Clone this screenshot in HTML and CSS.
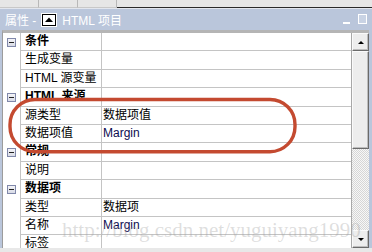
FILE: index.html
```html
<!DOCTYPE html>
<html lang="zh">
<head>
  <meta charset="UTF-8" />
  <title>属性 - HTML 项目</title>
  <link rel="stylesheet" href="styles.css">
</head>
<body>
  <div class="tabs">
    <span class="tab"></span>
    <span class="tab"></span>
    <span class="tab"></span>
    <span class="tab-rest"></span>
  </div>

  <div class="titlebar">
    <span class="title">属性 -</span>
    <span class="doc-icon">
      <svg width="16" height="14" viewBox="0 0 16 14">
        <rect x="0" y="0" width="16" height="14" fill="#fff" />
        <rect x="1.5" y="1.5" width="13" height="11" fill="none" stroke="#000" />
        <path d="M4 9 L8 4.5 L12 9 Z" fill="#000" />
      </svg>
    </span>
    <span class="title">HTML 项目</span>
    <span class="spacer"></span>
    <span class="btn-min"></span>
    <span class="btn-max"></span>
  </div>

  <div class="frame">
    <div class="grid">
      <div class="row cat"><span class="gutter"><span class="toggle"></span></span><span class="name">条件</span><span class="value"></span></div>
      <div class="row"><span class="gutter"></span><span class="name">生成变量</span><span class="value"></span></div>
      <div class="row"><span class="gutter"></span><span class="name">HTML 源变量</span><span class="value"></span></div>
      <div class="row cat"><span class="gutter"><span class="toggle"></span></span><span class="name">HTML 来源</span><span class="value"></span></div>
      <div class="row"><span class="gutter"></span><span class="name">源类型</span><span class="value">数据项值</span></div>
      <div class="row"><span class="gutter"></span><span class="name">数据项值</span><span class="value latin">Margin</span></div>
      <div class="row cat"><span class="gutter"><span class="toggle"></span></span><span class="name">常规</span><span class="value"></span></div>
      <div class="row"><span class="gutter"></span><span class="name">说明</span><span class="value"></span></div>
      <div class="row cat"><span class="gutter"><span class="toggle"></span></span><span class="name">数据项</span><span class="value"></span></div>
      <div class="row"><span class="gutter"></span><span class="name">类型</span><span class="value">数据项</span></div>
      <div class="row"><span class="gutter"></span><span class="name">名称</span><span class="value latin">Margin</span></div>
      <div class="row"><span class="gutter"></span><span class="name">标签</span><span class="value"></span></div>
    </div>

    <div class="scrollbar">
      <div class="sb-btn"><span class="arrow-up"></span></div>
      <div class="sb-thumb"></div>
      <div class="sb-track"></div>
      <div class="sb-btn"><span class="arrow-down"></span></div>
    </div>
  </div>

  <div class="footer"></div>

  <!-- annotation drawn over the screenshot -->
  <svg class="mark" width="372" height="252" viewBox="0 0 372 252">
    <rect x="10" y="99.5" width="285" height="52.2" rx="25" ry="25" fill="none" stroke="#c44a30" stroke-width="3.4" />
  </svg>
  <div class="watermark">http://blog.csdn.net/yuguiyang1990</div>
</body>
</html>
```

FILE: styles.css
```css
* {
  box-sizing: border-box;
}
body {
  margin: 0;
  width: 372px;
  height: 252px;
  overflow: hidden;
  position: relative;
  background-color: #bac6db;
  font-family: "Liberation Sans", "Noto Sans CJK SC", sans-serif;
  font-size: 12px;
  color: #000;
}

/* strip of tabs above the tool window */
.tabs {
  display: flex;
  height: 8px;
  background-color: #e6e6e6;
  border-bottom: 1px solid #2a2a2a;
}
.tab {
  width: 39px;
  border-right: 1px solid #b8b8b8;
  border-bottom: 1px solid #c8c8c8;
  margin-bottom: -1px;
}
.tab-rest {
  flex: 1;
}

.titlebar {
  display: flex;
  align-items: center;
  height: 22px;
  padding: 0 5px 0 5px;
  background-color: #bac6db;
  border-top: 1px solid #e2e6ee;
  color: #fff;
}
.title {
  font-size: 12px;
  white-space: pre;
}
.doc-icon {
  display: flex;
  margin: 0 5px 0 5px;
}
.spacer {
  flex: 1;
}
.btn-min {
  width: 7px;
  height: 2px;
  margin: 7px 8px 0 0;
  background-color: #fff;
}
.btn-max {
  width: 9px;
  height: 10px;
  border: 1px solid #fff;
  background-color: #c9d3e4;
  margin-bottom: 1px;
}

.frame {
  display: flex;
  height: 218px;
  margin: 0 3px 0 2px;
  border-top: 3px solid #b5b5b5;
  border-left: 1px solid #9c9c9c;
  background-color: #fff;
}
.grid {
  flex: 1;
  overflow: hidden;
  border-right: 1px solid #a8a8a8;
}
.row {
  display: flex;
  height: 18.4px;
  line-height: 17px;
}
.gutter {
  width: 18px;
  flex: none;
  display: flex;
  align-items: center;
  justify-content: center;
  border-right: 1px solid #c4c4c4;
}
.toggle {
  width: 9px;
  height: 9px;
  border: 1px solid #8088aa;
  background: linear-gradient(#f4f4f8, #d8dbe6);
  position: relative;
}
.toggle::after {
  content: "";
  position: absolute;
  left: 1px;
  top: 3px;
  width: 5px;
  height: 1px;
  background-color: #222;
}
.name {
  width: 81px;
  flex: none;
  padding-left: 4px;
  border-right: 1px solid #c4c4c4;
  border-bottom: 1px solid #c4c4c4;
  white-space: nowrap;
}
.value {
  flex: 1;
  padding-left: 1px;
  border-bottom: 1px solid #c4c4c4;
  white-space: nowrap;
}
.cat .name {
  font-weight: bold;
}
.latin {
  color: #0c0c50;
}

.scrollbar {
  width: 17px;
  flex: none;
  display: flex;
  flex-direction: column;
}
.sb-btn,
.sb-thumb {
  background-color: #ededed;
  border: 1px solid;
  border-color: #fafafa #6a6a6a #6a6a6a #fafafa;
  box-shadow: inset -1px -1px 0 #bdbdbd;
}
.sb-btn {
  height: 18px;
  display: flex;
  align-items: center;
  justify-content: center;
}
.sb-thumb {
  height: 98px;
}
.sb-track {
  flex: 1;
  background: repeating-conic-gradient(#d6d6d6 0 25%, #f7f7f7 0 50%) 0 0 / 2px 2px;
}
.arrow-up,
.arrow-down {
  width: 0;
  height: 0;
  border-left: 3px solid transparent;
  border-right: 3px solid transparent;
}
.arrow-up {
  border-bottom: 3px solid #000;
}
.arrow-down {
  border-top: 3px solid #000;
}

.footer {
  height: 4px;
  background-color: #e8e8e8;
}

.mark {
  position: absolute;
  left: 0;
  top: 0;
  pointer-events: none;
}
.watermark {
  position: absolute;
  left: 62px;
  top: 220px;
  font-family: "Liberation Serif", serif;
  font-size: 21px;
  line-height: 21px;
  color: rgba(160, 160, 160, 0.35);
  white-space: nowrap;
  pointer-events: none;
}
```
